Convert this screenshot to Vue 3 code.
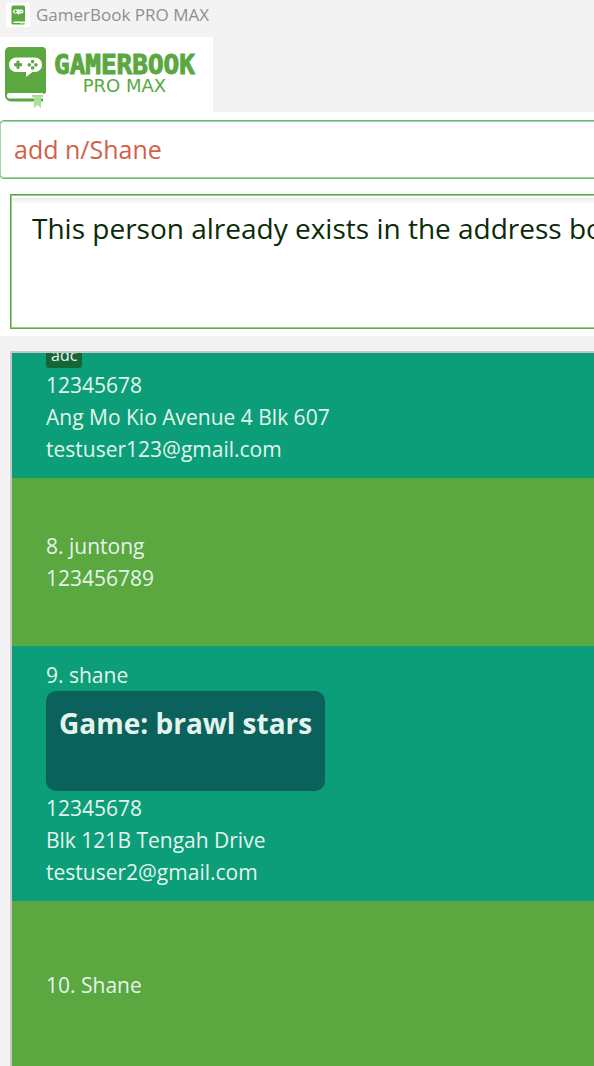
<script setup>
import { ref } from 'vue'

const command = ref('add n/Shane')
const result = ref('This person already exists in the address book.')

const persons = [
  { id: 7, clipped: true, tag: 'adc', lines: ['12345678', 'Ang Mo Kio Avenue 4 Blk 607', 'testuser123@gmail.com'] },
  { id: 8, name: '8. juntong', lines: ['123456789'] },
  { id: 9, name: '9. shane', game: 'Game: brawl stars', lines: ['12345678', 'Blk 121B Tengah Drive', 'testuser2@gmail.com'] },
  { id: 10, name: '10. Shane', lines: [] }
]
</script>

<template>
  <div class="window">
    <header class="titlebar">
      <svg class="app-icon" viewBox="0 0 24 24" aria-hidden="true">
        <rect width="24" height="24" fill="#fff" />
        <path d="M7 2.500h10.500a1.500 1.500 0 0 1 1.500 1.500v14.500H7.500v1.500h11v1.500H7a1.500 1.500 0 0 1-1.500-1.500V4A1.500 1.500 0 0 1 7 2.500z" fill="#5aa83f" />
        <path d="M9 6.500h6.500a2 2 0 0 1 0 4h-2l-1.500 1.500v-1.500H9a2 2 0 0 1 0-4z" fill="#fff" />
        <path d="M8 8.500h3M9.500 7.200v2.600M13.500 8.500h.9M15.300 8.500h.9" stroke="#5aa83f" stroke-width="0.900" />
        <path d="M14.500 19.500h2.700v3.300l-1.300-1-1.400 1z" fill="#a5e29a" />
      </svg>
      <span>GamerBook PRO MAX</span>
    </header>

    <div class="brand">
      <svg class="book" viewBox="0 0 44 64" aria-hidden="true">
        <path d="M4.500 0H37a4 4 0 0 1 4 4v42H4.500a2.500 2.500 0 0 0 0 5.500H38V54.500H6a6 6 0 0 1-6-6V4.500A4.500 4.500 0 0 1 4.500 0z" fill="#5aa83f" />
        <path d="M5.500 46H38v5H5.500a2.500 2.500 0 0 1 0-5z" fill="#fff" />
        <path d="M38 44h3a3 3 0 0 1-3 3z" fill="#5aa83f" />
        <path d="M11.200 10.500h18.600a7.200 7.200 0 0 1 0 14.500h-2.300l-6.500 5V25h-9.800a7.200 7.200 0 0 1 0-14.500z" fill="#fff" />
        <path d="M9 17.700h8M13 13.700v8" stroke="#5aa83f" stroke-width="3" />
        <g fill="#5aa83f">
          <rect x="26" y="13" width="3.200" height="3.200" rx="1" />
          <rect x="26" y="19.300" width="3.200" height="3.200" rx="1" />
          <rect x="22.700" y="16.200" width="3.200" height="3.200" rx="1" />
          <rect x="29.300" y="16.200" width="3.200" height="3.200" rx="1" />
        </g>
        <path d="M27 49h11" stroke="#5aa83f" stroke-width="1" />
        <path d="M29 49h7v12l-3.500-3-3.500 3z" fill="#a5e29a" />
      </svg>
      <div class="wordmark">
        <span class="word-top">GAMERBOOK</span>
        <span class="word-bottom">PRO MAX</span>
      </div>
    </div>

    <main class="console">
      <input v-model="command" class="command" type="text" aria-label="Command" spellcheck="false" />
      <textarea v-model="result" class="result" aria-label="Result" wrap="off" readonly spellcheck="false"></textarea>
    </main>

    <ul class="list">
      <li v-for="p in persons" :key="p.id" class="card" :class="{ clipped: p.clipped }">
        <span v-if="p.name" class="line">{{ p.name }}</span>
        <span v-if="p.tag" class="tag">{{ p.tag }}</span>
        <div v-if="p.game" class="game">{{ p.game }}</div>
        <span v-for="line in p.lines" :key="line" class="line">{{ line }}</span>
      </li>
    </ul>
  </div>
</template>

<style>
body {
  background: #f3f3f3;
  overflow: hidden;
}
</style>

<style scoped>
.window {
  display: flex;
  flex-direction: column;
  height: 100vh;
  overflow: hidden;
  background: #f3f3f3;
  font-family: "Segoe UI", "Open Sans", "Noto Sans", sans-serif;
}

.titlebar {
  flex: none;
  display: flex;
  align-items: center;
  gap: 6px;
  height: 29px;
  padding: 0 6px 8px;
  color: #8f8f8f;
  font-size: 17px;
  line-height: 28px;
}

.app-icon {
  width: 24px;
  height: 24px;
}

.brand {
  flex: none;
  align-self: flex-start;
  display: flex;
  gap: 5px;
  box-sizing: border-box;
  height: 75px;
  padding: 10px 18px 0 5px;
  background: #fff;
  color: #5aa83f;
}

.book {
  width: 44px;
  height: 64px;
}

.wordmark {
  display: flex;
  flex-direction: column;
  align-items: center;
  padding-top: 3px;
}

.word-top {
  font: bold 26px/30px "DejaVu Sans Mono", monospace;
  -webkit-text-stroke: 1px #5aa83f;
}

.word-bottom {
  font: 18px/20px "DejaVu Sans", sans-serif;
  margin-top: -4px;
}

.console {
  flex: none;
  display: flex;
  flex-direction: column;
  gap: 15px;
  padding: 8px 0 7px;
  background: #fff;
}

.command {
  box-sizing: border-box;
  width: auto;
  height: 59px;
  margin: 0 -8px 0 -1px;
  padding: 0 14px 2px;
  border: 1px solid #69b96b;
  border-radius: 5px;
  box-shadow: inset 0 0 0 1px #a5d6a5;
  background: #fff;
  color: #d2604b;
  font: 25px/34px "Segoe UI", "Open Sans", "Noto Sans", sans-serif;
  outline: none;
}

.result {
  box-sizing: border-box;
  height: 135px;
  margin: 0 -8px 0 10px;
  padding: 13px 21px;
  border: 1px solid #5aa83f;
  box-shadow: inset 0 0 0 1px #9ccb8c;
  background: linear-gradient(#fff 3px, #ebebeb 3px, #fff 9px);
  color: #0b2a08;
  font: 28px/40px "Segoe UI", "Open Sans", "Noto Sans", sans-serif;
  outline: none;
  overflow: hidden;
  resize: none;
}

.list {
  flex: 1;
  min-height: 0;
  margin: 15px 0 0 10px;
  padding: 0;
  border: 2px solid #c8c8c8;
  border-width: 2px 0 0 2px;
  overflow: hidden;
  list-style: none;
}

.card {
  display: flex;
  flex-direction: column;
  align-items: flex-start;
  justify-content: center;
  box-sizing: border-box;
  min-height: 168px;
  padding: 13px 34px;
  background: #5aa83f;
  color: #e4f4ec;
}

.card:nth-child(odd) {
  background: #0b9e79;
}

.card.clipped {
  justify-content: flex-end;
  height: 125px;
  min-height: 0;
  overflow: hidden;
}

.line {
  flex: none;
  font-size: 21px;
  line-height: 32px;
  white-space: nowrap;
}

.tag {
  flex: none;
  margin-bottom: 1px;
  padding: 0 5px;
  border-radius: 3px;
  background: #146637;
  color: #e4f4ec;
  font-size: 16px;
  line-height: 26px;
}

.game {
  box-sizing: border-box;
  height: 100px;
  margin-bottom: 1px;
  padding: 12px 13px;
  border-radius: 10px;
  background: #0b625c;
  font-size: 28px;
  font-weight: 700;
  line-height: 40px;
  white-space: nowrap;
}
</style>
